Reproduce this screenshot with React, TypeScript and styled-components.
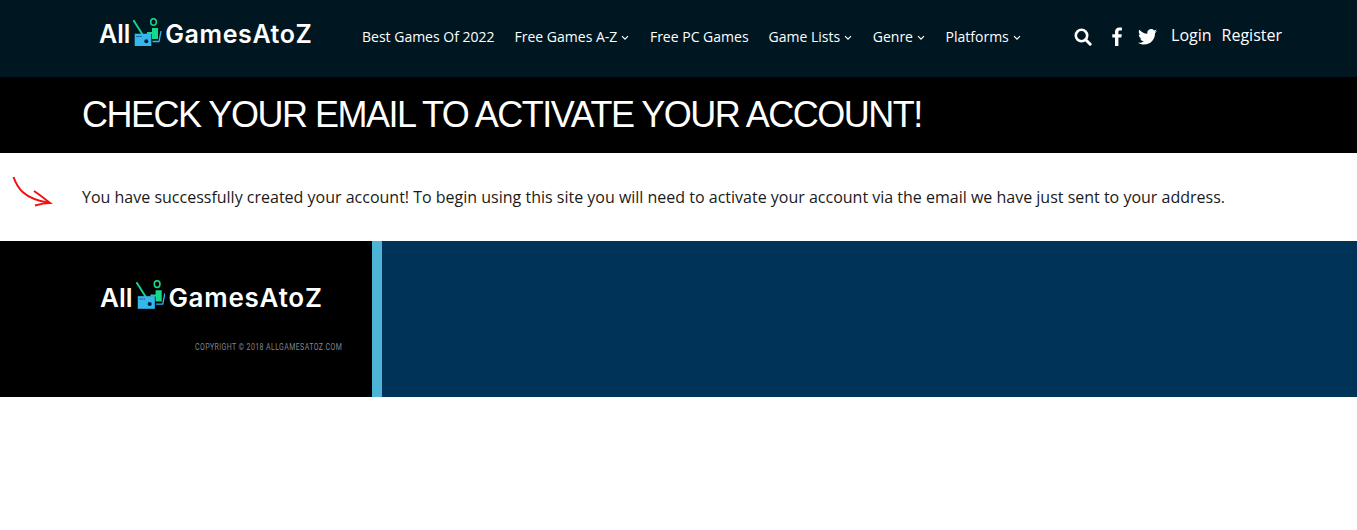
import React from "react";
import styled, { createGlobalStyle } from "styled-components";

const Global = createGlobalStyle`
  html, body { margin: 0; padding: 0; background: #fff; }
  body { font-family: "Open Sans", "Noto Sans", sans-serif; }
  * { box-sizing: border-box; }
`;

const Header = styled.header`
  height: 77px;
  background: #001721;
  display: flex;
  align-items: flex-start;
  position: relative;
`;
const LogoSlot = styled.div`
  width: 362px;
  padding: 18px 0 0 99px;
  flex: none;
`;
const LogoWrap = styled.a<{ $size: number; $gap: number }>`
  display: inline-flex;
  align-items: flex-end;
  color: #fff;
  font-family: "Inter", sans-serif;
  font-weight: 600;
  font-size: ${(p) => p.$size}px;
  line-height: 33px;
  height: 33px;
  gap: ${(p) => p.$gap}px;
  white-space: nowrap;
`;
const LogoWord = styled.span<{ $track: number }>`
  letter-spacing: ${(p) => p.$track}px;
`;
const LogoIcon = styled.svg`
  flex: none;
  margin-bottom: 5px;
`;
const Nav = styled.nav`
  display: flex;
  gap: 20px;
  padding-top: 27px;
  flex: none;
`;
const NavItem = styled.a`
  display: inline-flex;
  align-items: center;
  gap: 4px;
  color: #fff;
  font-size: 14px;
  line-height: 20px;
  white-space: nowrap;
`;
const Chevron = styled.svg`
  margin-top: 2px;
  margin-right: 0.6px;
`;
const Tools = styled.div`
  margin-left: auto;
  display: flex;
  align-items: center;
  padding: 24px 75px 0 0;
`;
const IconSlot = styled.span<{ $mr: number }>`
  display: inline-flex;
  margin-right: ${(p) => p.$mr}px;
  margin-top: 3px;
`;
const AuthLink = styled.a<{ $mr?: number }>`
  color: #fff;
  font-size: 16px;
  line-height: 22px;
  margin-right: ${(p) => p.$mr ?? 0}px;
`;
const TitleBand = styled.div`
  height: 76px;
  background: #000;
  padding: 16px 0 0 82px;
`;
const Title = styled.h1`
  margin: 0;
  color: #fff;
  font-family: "Liberation Sans", Arial, sans-serif;
  font-weight: 400;
  font-size: 36px;
  line-height: 44px;
  letter-spacing: -1.5px;
  white-space: nowrap;
`;
const Message = styled.section`
  height: 88px;
  background: #fff;
  padding: 33px 0 0 82px;
  position: relative;
`;
const Arrow = styled.svg`
  position: absolute;
  left: 10px;
  top: 20px;
`;
const MessageText = styled.p`
  margin: 0;
  color: #1a1a1a;
  font-size: 16px;
  line-height: 22px;
  white-space: nowrap;
`;
const Footer = styled.footer`
  height: 156px;
  display: flex;
  background: #003358;
`;
const FooterLeft = styled.div`
  width: 382px;
  flex: none;
  background: #000;
  border-right: 10px solid #4db4d6;
  padding: 40px 0 0 100px;
  display: flex;
  flex-direction: column;
  align-items: flex-start;
`;
const Copyright = styled.div`
  margin: 28px 0 0 95px;
  color: #7d8794;
  font-family: "Roboto", sans-serif;
  font-size: 8.5px;
  line-height: 10px;
  letter-spacing: 0.5px;
  white-space: nowrap;
  transform: scaleX(0.82);
  transform-origin: left center;
`;

const Logo = ({ size, scale, gap, track }: { size: number; scale: number; gap: number; track: number }) => (
  <LogoWrap $size={size} $gap={gap}>
    All
    <LogoIcon width={29 * scale} height={28 * scale} viewBox="0 0 29 28">
      <path d="M0.500 2.300 L9.500 16.500" stroke="#14d98a" strokeWidth="1.800" fill="none" />
      <ellipse cx="20.500" cy="4" rx="2.800" ry="3.300" fill="none" stroke="#14d98a" strokeWidth="1.500" />
      <path d="M19 10h6v11h-6v-5h-5v-2h5z" fill="#14d98a" />
      <rect x="1.700" y="15.700" width="16.600" height="12.300" fill="#35b6ec" />
      <circle cx="13.300" cy="23.300" r="2" fill="#06202c" />
      <path d="M3.500 18.500h1M5.500 18.500h1M7.500 18.500h1" stroke="#06202c" strokeWidth="1" />
      <path d="M28 13l-2 10.500h-6.500" stroke="#35b6ec" strokeWidth="1.300" fill="none" />
    </LogoIcon>
    <LogoWord $track={track}>GamesAtoZ</LogoWord>
  </LogoWrap>
);

const Down = () => (
  <Chevron width="8" height="6" viewBox="0 0 8 6">
    <path d="M1 1.200 L4 4.200 L7 1.200" stroke="#fff" strokeWidth="1.200" fill="none" />
  </Chevron>
);

export default function App() {
  return (
    <>
      <Global />
      <Header>
        <LogoSlot>
          <Logo size={25} scale={1} gap={3} track={0.6} />
        </LogoSlot>
        <Nav>
          <NavItem>Best Games Of 2022</NavItem>
          <NavItem>Free Games A-Z <Down /></NavItem>
          <NavItem>Free PC Games</NavItem>
          <NavItem>Game Lists <Down /></NavItem>
          <NavItem>Genre <Down /></NavItem>
          <NavItem>Platforms <Down /></NavItem>
        </Nav>
        <Tools>
          <IconSlot $mr={20}>
            <svg width="18" height="18" viewBox="0 0 18 18">
              <circle cx="7.500" cy="7.500" r="5.700" fill="none" stroke="#fff" strokeWidth="2.600" />
              <path d="M11.800 11.800 L16.200 16.200" stroke="#fff" strokeWidth="3" strokeLinecap="round" />
            </svg>
          </IconSlot>
          <IconSlot $mr={15}>
            <svg width="11" height="19" viewBox="0 0 11 19">
              <path d="M3 19V10.500H.3V7.200H3V4.800C3 2 4.700.4 7.300.4c1.200 0 2.300.1 2.600.1v3H8.100c-1.400 0-1.700.7-1.700 1.700v2h3.400l-.5 3.300H6.400V19z" fill="#fff" />
            </svg>
          </IconSlot>
          <IconSlot $mr={14}>
            <svg width="19" height="16" viewBox="0 0 24 20">
              <path d="M24 2.400c-.9.4-1.800.7-2.800.8 1-.6 1.800-1.600 2.200-2.700-1 .6-2 1-3.100 1.200C19.300.6 18 0 16.600 0c-2.700 0-4.900 2.200-4.900 4.900 0 .4 0 .8.1 1.100C7.700 5.800 4.100 3.900 1.700.9 1.200 1.700 1 2.600 1 3.400c0 1.700.9 3.200 2.200 4.100-.8 0-1.600-.2-2.200-.6v.1c0 2.400 1.700 4.400 3.900 4.800-.7.2-1.500.2-2.200.1.600 2 2.400 3.400 4.600 3.400-2.100 1.600-4.500 2.300-7.300 2 2.200 1.400 4.800 2.200 7.500 2.200 9.100 0 14-7.500 14-14v-.6c1-.7 1.800-1.600 2.500-2.500z" fill="#fff" />
            </svg>
          </IconSlot>
          <AuthLink $mr={10}>Login</AuthLink>
          <AuthLink>Register</AuthLink>
        </Tools>
      </Header>
      <TitleBand>
        <Title>CHECK YOUR EMAIL TO ACTIVATE YOUR ACCOUNT!</Title>
      </TitleBand>
      <Message>
        <Arrow width="44" height="36" viewBox="0 0 44 36">
          <path d="M3.500 4C7 14 13 26 40 30" stroke="#f01010" strokeWidth="2" fill="none" />
          <path d="M24 18C30 22 35 26 40 30 35 30 30 31 25 32.500" stroke="#f01010" strokeWidth="2" fill="none" />
        </Arrow>
        <MessageText>
          You have successfully created your account! To begin using this site you will need to activate your account via the email we have just sent to your address.
        </MessageText>
      </Message>
      <Footer>
        <FooterLeft>
          <Logo size={26} scale={1.03} gap={3} track={0.75} />
          <Copyright>COPYRIGHT © 2018 ALLGAMESATOZ.COM</Copyright>
        </FooterLeft>
      </Footer>
    </>
  );
}
